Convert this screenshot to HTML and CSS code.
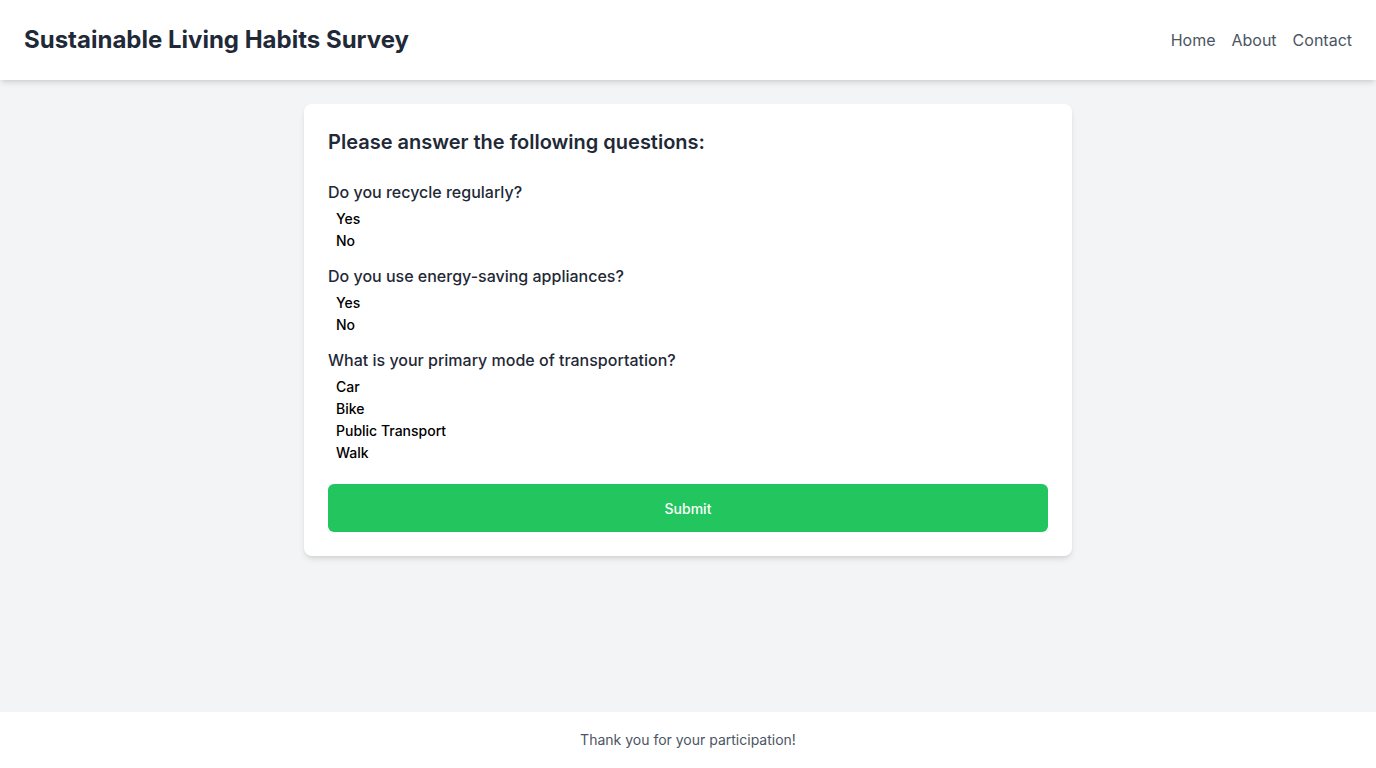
FILE: index.html
```html
<!DOCTYPE html>
<html lang="en">
<head>
<meta charset="utf-8">
<title>Sustainable Living Habits Survey</title>
<link rel="stylesheet" href="styles.css">
</head>
<body>
<div class="page">
  <header class="header">
    <h1 class="title">Sustainable Living Habits Survey</h1>
    <nav class="nav">
      <a href="#">Home</a>
      <a href="#">About</a>
      <a href="#">Contact</a>
    </nav>
  </header>
  <main class="main">
    <form class="card">
      <h2 class="card-title">Please answer the following questions:</h2>
      <div class="question">
        <p class="q-label">Do you recycle regularly?</p>
        <label class="option"><input type="radio" name="recycle" class="radio">Yes</label>
        <label class="option"><input type="radio" name="recycle" class="radio">No</label>
      </div>
      <div class="question">
        <p class="q-label">Do you use energy-saving appliances?</p>
        <label class="option"><input type="radio" name="energy" class="radio">Yes</label>
        <label class="option"><input type="radio" name="energy" class="radio">No</label>
      </div>
      <div class="question">
        <p class="q-label">What is your primary mode of transportation?</p>
        <label class="option"><input type="radio" name="transport" class="radio">Car</label>
        <label class="option"><input type="radio" name="transport" class="radio">Bike</label>
        <label class="option"><input type="radio" name="transport" class="radio">Public Transport</label>
        <label class="option"><input type="radio" name="transport" class="radio">Walk</label>
      </div>
      <button type="button" class="submit">Submit</button>
    </form>
  </main>
  <footer class="footer">Thank you for your participation!</footer>
</div>
</body>
</html>
```
FILE: styles.css
```css
* { box-sizing: border-box; }
html, body { margin: 0; padding: 0; }
body {
  font-family: Inter, "Noto Sans", sans-serif;
  background: #f3f4f6;
  color: #1f2937;
}
.page {
  min-height: 100vh;
  display: flex;
  flex-direction: column;
}
.header {
  background: #fff;
  padding: 24px;
  display: flex;
  justify-content: space-between;
  align-items: center;
  box-shadow: 0 4px 6px -1px rgba(0,0,0,0.1), 0 2px 4px -2px rgba(0,0,0,0.1);
  position: relative;
  z-index: 1;
}
.title {
  margin: 0;
  font-size: 24px;
  line-height: 32px;
  font-weight: 700;
  color: #1f2937;
}
.nav {
  display: flex;
  gap: 16px;
}
.nav a {
  color: #4b5563;
  text-decoration: none;
  font-size: 16px;
  line-height: 24px;
}
.main {
  flex: 1;
  padding: 24px;
  display: flex;
  justify-content: center;
  align-items: flex-start;
}
.card {
  width: 768px;
  background: #fff;
  border-radius: 8px;
  padding: 24px;
  box-shadow: 0 4px 6px -1px rgba(0,0,0,0.1), 0 2px 4px -2px rgba(0,0,0,0.1);
}
.card-title {
  margin: 0 0 24px;
  font-size: 20px;
  line-height: 28px;
  font-weight: 600;
  color: #1f2937;
}
.question {
  margin-bottom: 12px;
}
.q-label {
  margin: 0 0 4px;
  font-size: 16px;
  line-height: 24px;
  font-weight: 500;
  color: #1f2937;
}
.option {
  display: block;
  padding-left: 8px;
  font-size: 14px;
  line-height: 22px;
  font-weight: 500;
  color: #000;
}
.radio {
  display: none;
}
.submit {
  display: block;
  width: 100%;
  margin-top: 20px;
  height: 48px;
  border: none;
  border-radius: 6px;
  background: #22c55e;
  color: #fff;
  font-family: Inter, "Noto Sans", sans-serif;
  font-size: 14px;
  font-weight: 500;
  cursor: pointer;
}
.footer {
  background: #fff;
  padding: 18px 16px;
  text-align: center;
  font-size: 14px;
  line-height: 20px;
  color: #4b5563;
}
```
